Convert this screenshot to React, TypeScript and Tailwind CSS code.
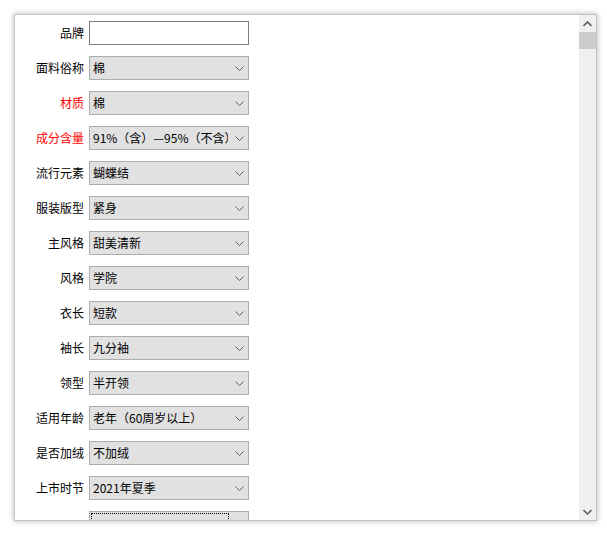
import React from 'react'

type Row = {
    label: string
    value?: string
    required?: boolean
    kind?: 'input' | 'select' | 'focus'
}

const rows: Row[] = [
    { label: '品牌', kind: 'input' },
    { label: '面料俗称', value: '棉' },
    { label: '材质', value: '棉', required: true },
    { label: '成分含量', value: '91%（含）—95%（不含）', required: true },
    { label: '流行元素', value: '蝴蝶结' },
    { label: '服装版型', value: '紧身' },
    { label: '主风格', value: '甜美清新' },
    { label: '风格', value: '学院' },
    { label: '衣长', value: '短款' },
    { label: '袖长', value: '九分袖' },
    { label: '领型', value: '半开领' },
    { label: '适用年龄', value: '老年（60周岁以上）' },
    { label: '是否加绒', value: '不加绒' },
    { label: '上市时节', value: '2021年夏季' },
    { label: '', kind: 'focus' },
]

function Chevron() {
    return (
        <svg width="9" height="5" viewBox="0 0 9 5" className="shrink-0">
            <path d="M0.5 0.5 L4.5 4.5 L8.5 0.5" fill="none" stroke="#606060" strokeWidth="1" />
        </svg>
    )
}

function ScrollArrow({ up }: { up?: boolean }) {
    return (
        <div className="h-[17px] flex items-center justify-center">
            <svg width="9" height="6" viewBox="0 0 9 6">
                <path
                    d={up ? 'M0.5 5 L4.5 1 L8.5 5' : 'M0.5 1 L4.5 5 L8.5 1'}
                    fill="none"
                    stroke="#606060"
                    strokeWidth="1.6"
                />
            </svg>
        </div>
    )
}

function Field({ row }: { row: Row }) {
    if (row.kind === 'input') {
        return <div className="w-[160px] h-[24px] border border-[#7a7a7a] bg-white" />
    }
    if (row.kind === 'focus') {
        // focused combo, dotted focus rectangle
        return (
            <div className="w-[160px] h-[24px] border border-[#adadad] bg-[#e1e1e1] p-[1px]">
                <div className="w-[138px] h-[20px] border border-dotted border-black" />
            </div>
        )
    }
    return (
        <div className="w-[160px] h-[24px] border border-[#adadad] bg-[#e1e1e1] flex items-center pl-[3px]">
            <div className="w-[135px] h-[18px] leading-[18px] whitespace-nowrap overflow-hidden text-black">
                {row.value}
            </div>
            <div className="flex-1 flex justify-center pl-[2px]">
                <Chevron />
            </div>
        </div>
    )
}

export default function App() {
    return (
        <div
            className="w-[607px] h-[536px] bg-white pt-[14px] pl-[14px] text-[12px] leading-[18px]"
            style={{ fontFamily: '"Noto Sans CJK SC", "Noto Sans", sans-serif' }}
        >
            <div className="w-[583px] h-[507px] border border-[#c2c2c2] bg-white shadow-[0_0_6px_rgba(0,0,0,0.3)] flex">
                {/* form area */}
                <div className="flex-1 overflow-hidden pt-[6px]">
                    <div className="flex flex-col gap-[11px]">
                        {rows.map((row, i) => (
                            <div key={i} className="flex items-center gap-[5px]">
                                <div
                                    className={
                                        'w-[69px] text-right whitespace-nowrap ' +
                                        (row.required ? 'text-[#ff0000]' : 'text-black')
                                    }
                                >
                                    {row.label}
                                </div>
                                <Field row={row} />
                            </div>
                        ))}
                    </div>
                </div>

                {/* scrollbar */}
                <div className="w-[17px] bg-[#f0f0f0] flex flex-col">
                    <ScrollArrow up />
                    <div className="h-[17px] bg-[#cdcdcd]" />
                    <div className="flex-1" />
                    <ScrollArrow />
                </div>
            </div>
        </div>
    )
}
